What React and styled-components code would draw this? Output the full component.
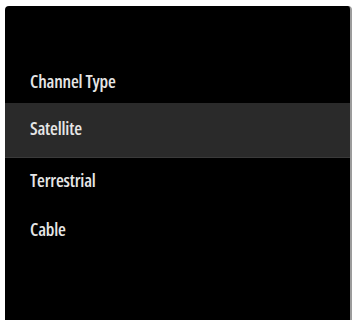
import React from "react";
import styled, { createGlobalStyle } from "styled-components";

const GlobalStyle = createGlobalStyle`
  html, body {
    margin: 0;
    padding: 0;
    background: #fff;
  }
`;

const items = ["Satellite", "Terrestrial", "Cable"];

function App() {
    return (
        <>
            <GlobalStyle />
            <Panel>
                <Title>Channel Type</Title>
                {items.map((item, i) => (
                    <Row key={item} $active={i === 0}>{item}</Row>
                ))}
            </Panel>
        </>
    );
}

const Panel = styled.div`
    box-sizing: border-box;
    margin: 6px 1px 0 5px;
    height: 314px;
    padding-top: 52px;
    background: #000;
    border-radius: 4px 4px 0 0;
    border-right: 2px solid #9c9c9c;
    display: flex;
    flex-direction: column;
    font-family: "Open Sans", sans-serif;
    font-stretch: 75%;
    font-size: 18px;
    font-weight: 600;
    letter-spacing: -0.2px;
    color: #e6e6e6;
`;

const Title = styled.div`
    height: 45px;
    display: flex;
    align-items: center;
    padding-left: 25px;
`;

const Row = styled.div`
    height: ${p => (p.$active ? "55px" : "49px")};
    display: flex;
    align-items: center;
    padding-left: 25px;
    padding-bottom: ${p => (p.$active ? "4px" : "6px")};
    background: ${p => (p.$active ? "#2a2a2a" : "transparent")};
    border-bottom: ${p => (p.$active ? "1px solid #3a3a3a" : "none")};
    box-sizing: border-box;
`;

export default App;
